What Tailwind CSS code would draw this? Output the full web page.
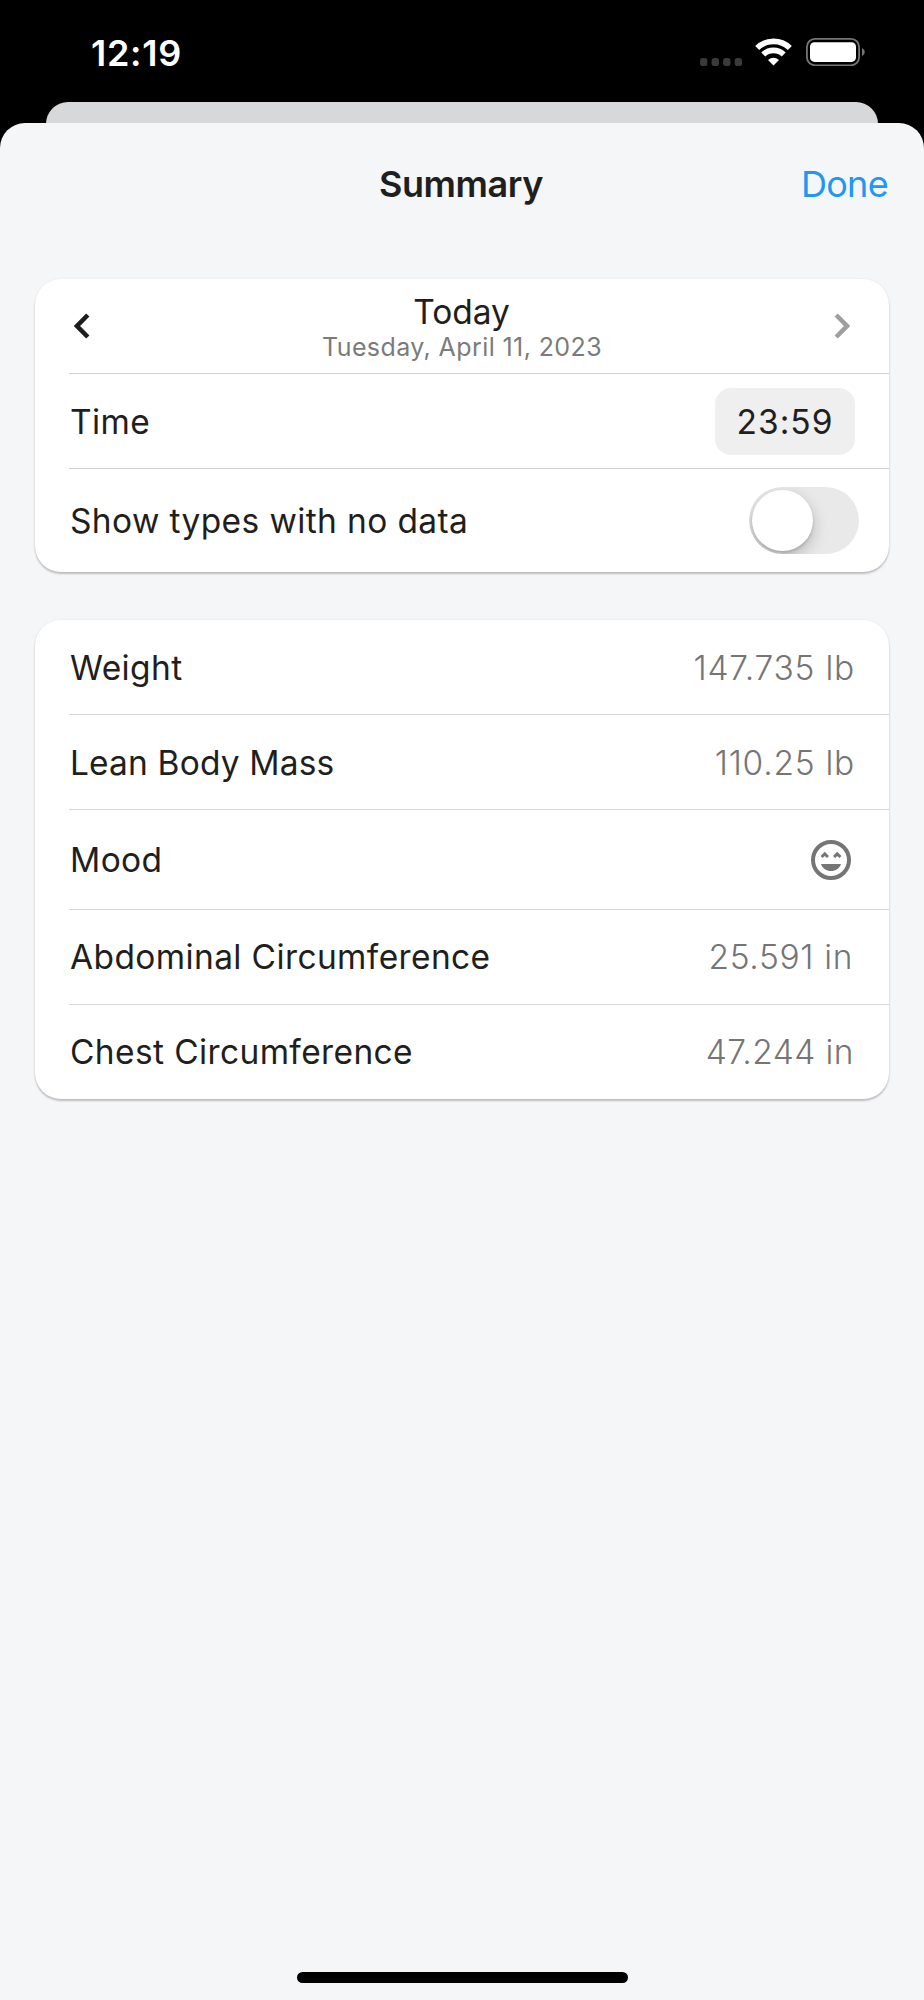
<!DOCTYPE html>
<html lang="en">
<head>
    <meta charset="UTF-8">
    <meta name="viewport" content="width=device-width, initial-scale=1.0">
    <title>Summary</title>
    <script src="https://cdn.jsdelivr.net/npm/@tailwindcss/browser@4"></script>
</head>
<body class="bg-black font-['Inter',sans-serif] text-[#1f1f20] w-[924px] h-[2000px] overflow-hidden flex flex-col">

    <!-- Status bar -->
    <div class="h-[101px] shrink-0 flex justify-between pl-[91px] pr-[58px] text-white">
        <span class="mt-[31px] text-[36px] leading-[44px] font-semibold tracking-[0.7px]">12:19</span>
        <div class="flex items-start">
            <svg class="mt-[58px] mr-[13px]" width="42" height="8" viewBox="0 0 42 8" fill="#3a3a3a">
                <rect x="0" y="0" width="7.4" height="8" rx="2.8"/>
                <rect x="11.6" y="0" width="7.4" height="8" rx="2.8"/>
                <rect x="23.1" y="0" width="7.4" height="8" rx="2.8"/>
                <rect x="34.7" y="0" width="7.4" height="8" rx="2.8"/>
            </svg>
            <svg class="mt-[38px] mr-[14px]" width="37" height="28" viewBox="0 0 37 28" fill="none" stroke="#fff" stroke-width="5.8">
                <path d="M2.200 10a23.500 23.500 0 0 1 32.600 0"/>
                <path d="M8.300 16.500a14.800 14.800 0 0 1 20.400 0"/>
                <path d="M18.500 27.600L13 22Q18.500 17.400 24 22Z" fill="#fff" stroke="none"/>
            </svg>
            <svg class="mt-[38px]" width="60" height="28" viewBox="0 0 60 28" fill="none">
                <rect x="0.900" y="0.900" width="52.200" height="26.400" rx="8" stroke="#757575" stroke-width="1.800"/>
                <rect x="4" y="4.300" width="46" height="19.600" rx="4.500" fill="#fff"/>
                <path d="M56 10Q58.800 11.500 58.800 14Q58.800 16.800 56 18.200Z" fill="#757575"/>
            </svg>
        </div>
    </div>

    <!-- Sheet behind -->
    <div class="mx-[46px] mt-[0.5px] h-[45px] -mb-[23.5px] shrink-0 rounded-t-[22px] bg-[#d7d8da]"></div>

    <!-- Sheet -->
    <div class="relative flex-1 rounded-t-[25px] bg-[#f5f6f8] px-[35px] flex flex-col">

        <header class="h-[156px] shrink-0 grid grid-cols-3 text-[36px] leading-[44px] pt-[39px]">
            <h1 class="col-start-2 text-center font-semibold tracking-[-0.4px] -ml-[2px]">Summary</h1>
            <a href="#" class="text-right text-[#2196f3] tracking-[-0.7px] pr-px">Done</a>
        </header>

        <section class="h-[293px] shrink-0 rounded-[26px] bg-white shadow-[0_2px_2px_rgba(0,0,0,0.22),0_0_3px_rgba(0,0,0,0.06)] pl-[34px] text-[33.500px] tracking-[0.38px] flex flex-col">
            <div class="h-[95px] border-b border-[#d0d0d0] flex items-center justify-between pr-[39px]">
                <svg class="ml-[5px]" width="16" height="26" viewBox="0 0 16 26" fill="none" stroke="#1d1d1e" stroke-width="4.600"><path d="M13.800 2L3 13L13.800 24"/></svg>
                <div class="text-center flex flex-col pt-[3px]">
                    <span class="leading-[38px] tracking-[-0.1px] pr-px">Today</span>
                    <span class="text-[25px] leading-[32px] text-[#7b7b7b] tracking-[0.4px]">Tuesday, April 11, 2023</span>
                </div>
                <svg width="16" height="26" viewBox="0 0 16 26" fill="none" stroke="#9e9e9e" stroke-width="4.600"><path d="M2.200 2L13 13L2.200 24"/></svg>
            </div>
            <div class="h-[95px] border-b border-[#d0d0d0] flex items-center justify-between pr-[34px]">
                <span class="pt-[2px] pl-px">Time</span>
                <span class="w-[140px] h-[67px] rounded-[16px] bg-[#efefef] flex items-center justify-center pt-[2px] tracking-[1px]">23:59</span>
            </div>
            <div class="h-[103px] flex items-center justify-between pr-[30px]">
                <span class="pt-[2px] pl-px">Show types with no data</span>
                <div class="w-[110px] h-[67px] rounded-full bg-[#e9e9e9] p-[3px] overflow-hidden">
                    <div class="size-[61px] rounded-full bg-white shadow-[0_6px_16px_rgba(0,0,0,0.22),0_2px_3px_rgba(0,0,0,0.14)]"></div>
                </div>
            </div>
        </section>

        <section class="mt-[48px] h-[479px] shrink-0 rounded-[26px] bg-white shadow-[0_2px_2px_rgba(0,0,0,0.22),0_0_3px_rgba(0,0,0,0.06)] pl-[34px] text-[33.500px] tracking-[0.38px] flex flex-col">
            <div class="h-[95px] border-b border-[#d6d6d6] flex items-center justify-between pr-[34px] pt-[2px]">
                <span class="pl-px">Weight</span>
                <span class="font-light text-[#757575] tracking-[0.8px]">147.735 lb</span>
            </div>
            <div class="h-[95px] border-b border-[#d6d6d6] flex items-center justify-between pr-[34px] pt-[2px]">
                <span class="pl-px tracking-[0.15px]">Lean Body Mass</span>
                <span class="font-light text-[#757575] tracking-[0.75px]">110.25 lb</span>
            </div>
            <div class="h-[100px] border-b border-[#d6d6d6] flex items-center justify-between pr-[34px]">
                <span class="pt-[2px] pl-px">Mood</span>
                <svg width="48" height="48" viewBox="0 0 24 24" fill="#757575">
                    <circle cx="12" cy="12" r="9" fill="none" stroke="#757575" stroke-width="2"/>
                    <path d="M8.880 9.940l1.060 1.060 1.060-1.060L8.880 7.820 6.760 9.940 7.820 11zM13 9.940L14.060 11l1.060-1.060L16.180 11l1.060-1.060-2.120-2.120zM7 14c.780 2.340 2.720 3.500 5 3.500s4.220-1.160 5-3.500z"/>
                </svg>
            </div>
            <div class="h-[95px] border-b border-[#d6d6d6] flex items-center justify-between pr-[36px] pt-px">
                <span class="pl-px">Abdominal Circumference</span>
                <span class="font-light text-[#757575] tracking-[0.65px]">25.591 in</span>
            </div>
            <div class="h-[94px] flex items-center justify-between pr-[35px] pt-px">
                <span class="pl-px">Chest Circumference</span>
                <span class="font-light text-[#757575] tracking-[0.45px]">47.244 in</span>
            </div>
        </section>

        <!-- Home indicator -->
        <div class="mt-auto mb-[17px] ml-[262px] w-[331px] h-[11px] rounded-full bg-black"></div>
    </div>

</body>
</html>
